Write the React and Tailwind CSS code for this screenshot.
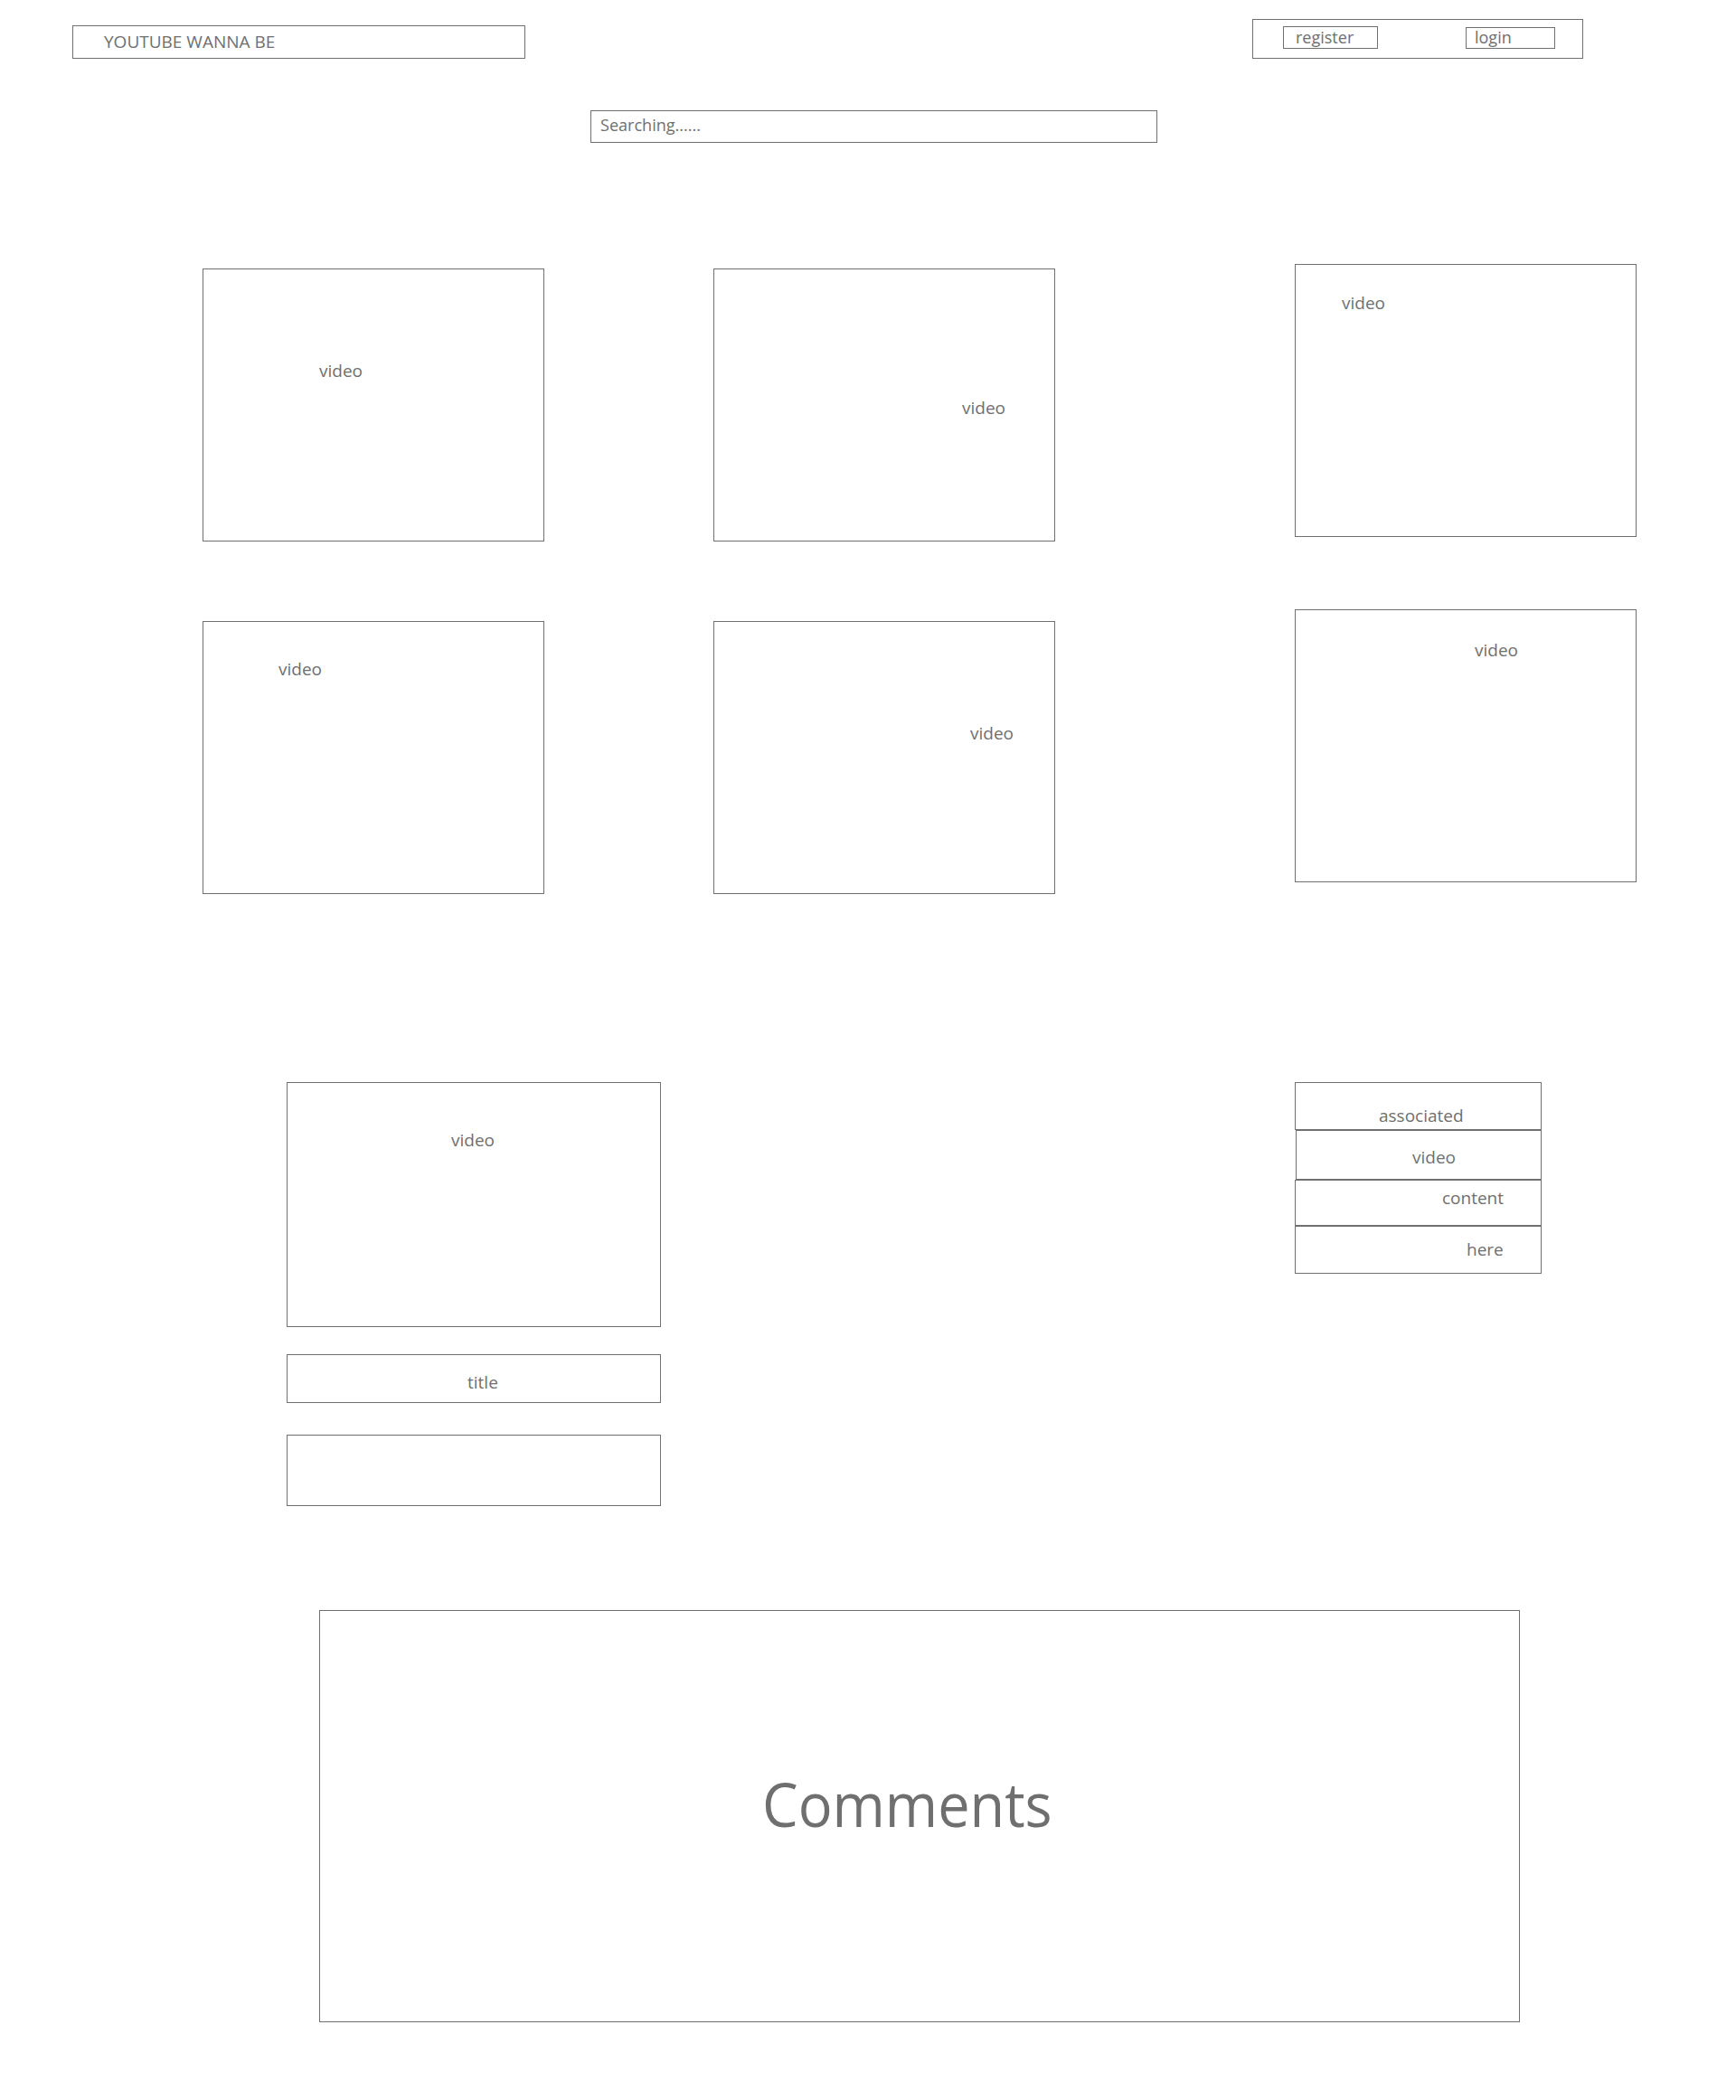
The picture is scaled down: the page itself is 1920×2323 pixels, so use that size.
import React from "react";

const line = "border border-[#707070]";
const label = "text-[19px] leading-none text-[#6f6f6f] whitespace-nowrap";

// grid of placeholder videos, each with its own label spot like the wireframe
const columns = [
  {
    wrap: "mt-[5px]",
    gap: "mt-[88px]",
    cards: [
      { pad: "pt-[103px] pl-[128px]" },
      { pad: "pt-[43px] pl-[83px]" },
    ],
  },
  {
    wrap: "mt-[5px] ml-[187px]",
    gap: "mt-[88px]",
    cards: [
      { pad: "pt-[144px] pl-[274px]" },
      { pad: "pt-[114px] pl-[283px]" },
    ],
  },
  {
    wrap: "ml-[265px]",
    gap: "mt-[80px]",
    cards: [
      { pad: "pt-[33px] pl-[51px]" },
      { pad: "pt-[35px] pl-[198px]" },
    ],
  },
];

const related = [
  { text: "associated", cls: "h-[53px] w-[273px] pt-[27px] pl-[92px]" },
  { text: "video", cls: "h-[55px] w-[272px] ml-px pt-[20px] pl-[128px]" },
  { text: "content", cls: "h-[51px] w-[273px] pt-[10px] pl-[162px]" },
  { text: "here", cls: "h-[53px] w-[273px] pt-[16px] pl-[189px]" },
];

function VideoCard({ pad }) {
  return (
    <div className={`${line} w-[378px] h-[302px] ${pad}`}>
      <div className={label}>video</div>
    </div>
  );
}

export default function App() {
  return (
    <div
      className="min-h-[2323px] bg-white overflow-hidden"
      style={{ fontFamily: '"Open Sans", "Noto Sans", sans-serif' }}
    >
      {/* header */}
      <div className="flex items-end pt-[21px]">
        <div className={`${line} ml-[80px] w-[501px] h-[37px] pt-[8px] pl-[34px]`}>
          <div className="text-[19px] leading-none text-[#6f6f6f] whitespace-nowrap">
            YOUTUBE WANNA BE
          </div>
        </div>
        <div className={`${line} ml-[804px] w-[366px] h-[44px] flex items-start pt-[7px] pl-[33px]`}>
          <div className={`${line} w-[105px] h-[25px] pt-[2px] pl-[13px]`}>
            <div className="text-[18px] leading-none text-[#6f6f6f]">register</div>
          </div>
          <div className={`${line} ml-[97px] mt-px w-[99px] h-[24px] pt-[1px] pl-[9px]`}>
            <div className="text-[18px] leading-none text-[#6f6f6f]">login</div>
          </div>
        </div>
      </div>

      {/* search */}
      <div className={`${line} mt-[57px] ml-[653px] w-[627px] h-[36px] pt-[6px] pl-[10px]`}>
        <div className="text-[19px] leading-none text-[#6f6f6f] whitespace-nowrap origin-left scale-x-[0.95]">
          Searching......
        </div>
      </div>

      {/* video grid */}
      <div className="flex items-start mt-[134px] pl-[224px]">
        {columns.map((col, i) => (
          <div key={i} className={`flex flex-col ${col.wrap}`}>
            <VideoCard pad={col.cards[0].pad} />
            <div className={col.gap}>
              <VideoCard pad={col.cards[1].pad} />
            </div>
          </div>
        ))}
      </div>

      {/* player + related */}
      <div className="flex items-start mt-[208px] pl-[317px]">
        <div className="flex flex-col w-[414px]">
          <div className={`${line} h-[271px] pt-[54px] pl-[181px]`}>
            <div className={label}>video</div>
          </div>
          <div className={`${line} mt-[30px] h-[54px] pt-[21px] pl-[199px]`}>
            <div className={label}>title</div>
          </div>
          <div className={`${line} mt-[35px] h-[79px]`} />
        </div>
        <div className="ml-[701px] flex flex-col">
          {related.map((r) => (
            <div key={r.text} className={`${line} ${r.cls}`}>
              <div className={label}>{r.text}</div>
            </div>
          ))}
        </div>
      </div>

      {/* comments */}
      <div className={`${line} mt-[115px] ml-[353px] w-[1328px] h-[456px] pt-[180px] pl-[489px]`}>
        <div className="text-[67px] leading-none text-[#6f6f6f] whitespace-nowrap origin-left scale-x-[0.94]">
          Comments
        </div>
      </div>
    </div>
  );
}
